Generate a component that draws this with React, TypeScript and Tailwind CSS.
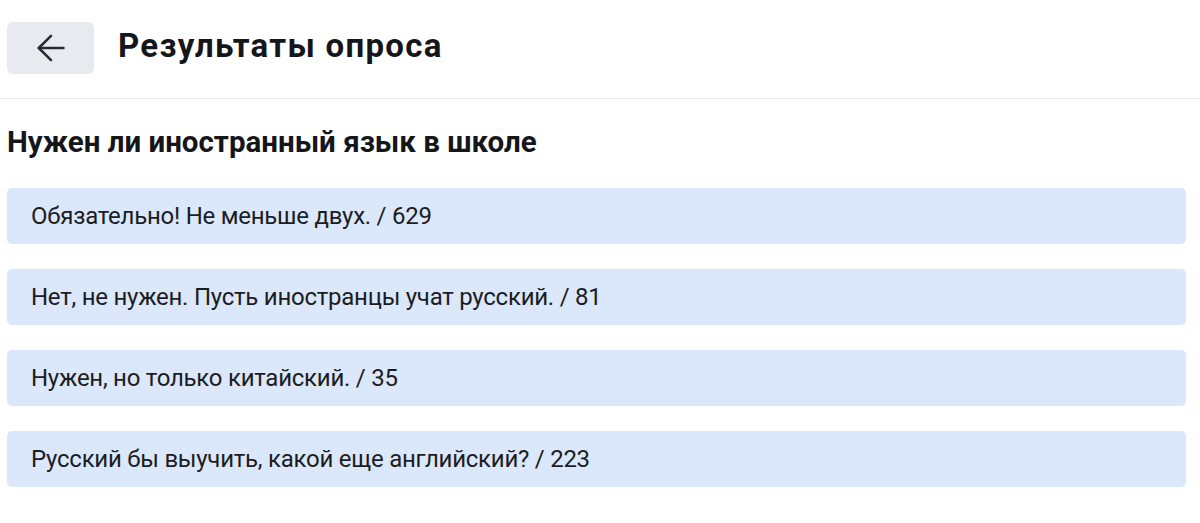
const answers = [
  { text: 'Обязательно! Не меньше двух.', votes: 629 },
  { text: 'Нет, не нужен. Пусть иностранцы учат русский.', votes: 81 },
  { text: 'Нужен, но только китайский.', votes: 35 },
  { text: 'Русский бы выучить, какой еще английский?', votes: 223 },
]

function BackArrow() {
  return (
    <svg width="28" height="28" viewBox="0 0 28 28" fill="none" stroke="#2a2a2e" strokeWidth="2.5" strokeLinecap="round" strokeLinejoin="round">
      <path d="M26.5 14H1.8" />
      <path d="M14 1.8L1.8 14L14 26.2" />
    </svg>
  )
}

export default function App() {
  return (
    <div
      className="w-[1200px] h-[523px] bg-white overflow-hidden"
      style={{ fontFamily: 'Roboto, "Noto Sans", sans-serif' }}
    >
      {/* Header */}
      <div className="flex items-start gap-6 pl-[7px] pt-[22px] pb-6 border-b border-[#e8e8ec]">
        <button className="w-[87px] h-[52px] rounded-md bg-[#e9eaef] flex items-center justify-center">
          <BackArrow />
        </button>
        <h1 className="mt-[7px] text-[33px] font-bold text-[#15161a] leading-none tracking-[1.3px]">
          Результаты опроса
        </h1>
      </div>

      {/* Poll */}
      <div className="pl-[7px] pr-[14px] pt-[29px]">
        <h2 className="text-[29.5px] font-bold text-[#15161a] leading-none mb-[30px]">
          Нужен ли иностранный язык в школе
        </h2>
        <div className="flex flex-col gap-[25px]">
          {answers.map((a, i) => (
            <div
              key={i}
              className="h-[56px] rounded-[5px] bg-[#dbe7fb] flex items-center px-6 text-[24px] tracking-[-0.25px] text-[#1c1d21]"
            >
              {a.text} / {a.votes}
            </div>
          ))}
        </div>
      </div>
    </div>
  )
}
